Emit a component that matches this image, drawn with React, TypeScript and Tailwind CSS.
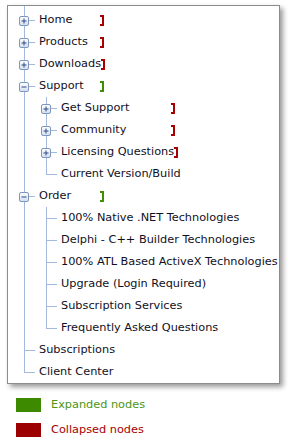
import React from "react";

type TreeNode = {
  label: string;
  state?: "expanded" | "collapsed";
  children?: TreeNode[];
};

const tree: TreeNode[] = [
  { label: "Home", state: "collapsed" },
  { label: "Products", state: "collapsed" },
  { label: "Downloads", state: "collapsed" },
  {
    label: "Support",
    state: "expanded",
    children: [
      { label: "Get Support", state: "collapsed" },
      { label: "Community", state: "collapsed" },
      { label: "Licensing Questions", state: "collapsed" },
      { label: "Current Version/Build" },
    ],
  },
  {
    label: "Order",
    state: "expanded",
    children: [
      { label: "100% Native .NET Technologies" },
      { label: "Delphi - C++ Builder Technologies" },
      { label: "100% ATL Based ActiveX Technologies" },
      { label: "Upgrade (Login Required)" },
      { label: "Subscription Services" },
      { label: "Frequently Asked Questions" },
    ],
  },
  { label: "Subscriptions" },
  { label: "Client Center" },
];

const LINE = "#a3b9dd";

// one 22px indent cell: guide lines plus the optional +/- box
function Guide({
  kind,
  last,
  state,
}: {
  kind: "pass" | "empty" | "own";
  last?: boolean;
  state?: "expanded" | "collapsed";
}) {
  return (
    <svg width="22" height="22" className="shrink-0 block">
      {kind === "pass" && <line x1="11.5" y1="0" x2="11.5" y2="22" stroke={LINE} />}
      {kind === "own" && (
        <>
          <line x1="11.5" y1="0" x2="11.5" y2={last ? 11 : 22} stroke={LINE} />
          <line x1="11" y1="11.5" x2="22" y2="11.5" stroke={LINE} />
        </>
      )}
      {kind === "own" && state && (
        <>
          <defs>
            <linearGradient id="tg" x1="0" y1="0" x2="0" y2="1">
              <stop offset="0" stopColor="#ffffff" />
              <stop offset="1" stopColor="#d3def0" />
            </linearGradient>
          </defs>
          <rect x="6.5" y="7.5" width="9" height="9" rx="1.5" fill="url(#tg)" stroke="#7d97bf" />
          <line x1="8.5" y1="12" x2="13.5" y2="12" stroke="#2a4a86" />
          {state === "collapsed" && (
            <line x1="11" y1="9.5" x2="11" y2="14.5" stroke="#2a4a86" />
          )}
        </>
      )}
    </svg>
  );
}

function Bracket({ color }: { color: string }) {
  return (
    <span
      className="inline-block w-[4px] h-[11px] border-t-2 border-b-2 border-r-2 shrink-0"
      style={{ borderColor: color }}
    />
  );
}

function Rows({ nodes, trail }: { nodes: TreeNode[]; trail: boolean[] }) {
  return (
    <>
      {nodes.map((n, i) => {
        const last = i === nodes.length - 1;
        return (
          <React.Fragment key={n.label}>
            <div className="flex items-center h-[22px]">
              {trail.map((t, k) => (
                <Guide key={k} kind={t ? "pass" : "empty"} />
              ))}
              <Guide kind="own" last={last} state={n.state} />
              <span
                className={
                  "ml-[4px] whitespace-nowrap leading-[22px] " +
                  (trail.length === 0 ? "min-w-[61px]" : "min-w-[110px]")
                }
              >
                {n.label}
              </span>
              {n.state === "collapsed" && <Bracket color="#a80000" />}
              {n.state === "expanded" && <Bracket color="#3f8f00" />}
            </div>
            {n.state === "expanded" && n.children && (
              <Rows nodes={n.children} trail={[...trail, !last]} />
            )}
          </React.Fragment>
        );
      })}
    </>
  );
}

export default function App() {
  return (
    <div
      className="w-[299px] h-[440px] bg-white overflow-hidden text-[11.3px] text-[#101024]"
      style={{ fontFamily: '"DejaVu Sans", Verdana, sans-serif' }}
    >
      <div className="ml-[7px] mt-[5px] w-[273px] border border-[#8c8c8c] bg-white shadow-[3px_3px_5px_rgba(0,0,0,0.4)]">
        <div className="h-[3px] pl-[16px]">
          <div className="w-px h-full bg-[#a3b9dd]" />
        </div>
        <div className="pl-[5px]">
          <Rows nodes={tree} trail={[]} />
        </div>
      </div>

      <div className="ml-[16px] mt-[13px] flex flex-col gap-[8px]">
        <div className="flex items-center gap-[10px]">
          <div className="w-[25px] h-[14px] bg-[#3d8a00]" />
          <span className="text-[#4b9514]">Expanded nodes</span>
        </div>
        <div className="flex items-center gap-[10px]">
          <div className="w-[25px] h-[14px] bg-[#9c0000]" />
          <span className="text-[#a50000]">Collapsed nodes</span>
        </div>
      </div>
    </div>
  );
}
